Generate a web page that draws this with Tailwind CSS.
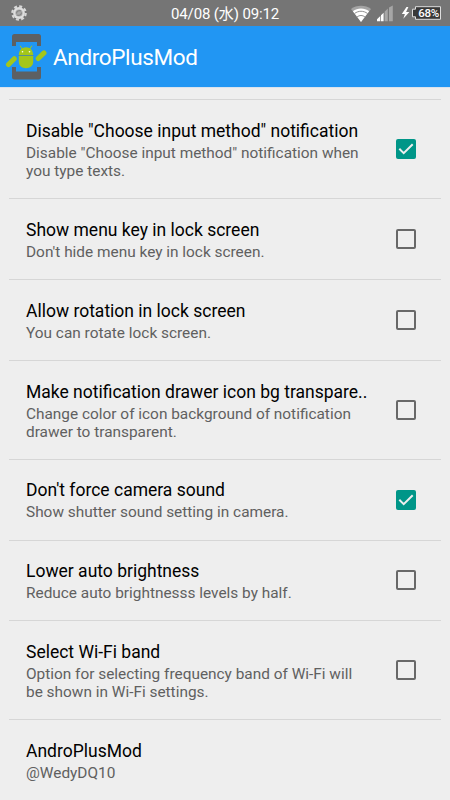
<!DOCTYPE html>
<html lang="en">
<head>
<meta charset="utf-8">
<title>AndroPlusMod</title>
<script src="https://cdn.jsdelivr.net/npm/@tailwindcss/browser@4"></script>
</head>
<body class="w-[450px] h-[800px] overflow-hidden bg-[#eeeeee] font-[Roboto,'Noto_Sans_CJK_JP',sans-serif]">
<header>
  <div class="relative flex h-[26px] items-center justify-between bg-[#757575] px-[10px] text-white">
    <svg class="size-[18px]" viewBox="0 0 18 18">
      <circle cx="9" cy="9" r="6.7" fill="none" stroke="#d8d8d8" stroke-width="2.2" stroke-dasharray="3 2.26"/>
      <circle cx="9" cy="9" r="5.9" fill="#dedede"/>
      <circle cx="9" cy="9" r="3.6" fill="#aaa"/>
      <path d="M6.5 9.5C6.5 7 9 6 11 7M7 11c2 1 4.500 0 4.500-2.500" fill="none" stroke="#858585" stroke-width="1.200"/>
    </svg>
    <div class="absolute left-[171px] top-[4px] h-[20px] whitespace-nowrap text-[15px] leading-[20px] tracking-[-.13px]">04/08 (水) 09:12</div>
    <svg class="absolute left-[348px] top-[3px] h-[22px] w-[96px]" viewBox="348 3 96 22">
      <path d="M361 22 351 9C356.500 4.600 365.500 4.600 371 9Z" fill="#a4a4a4"/>
      <path d="M361 22 352.900 11.200C357.500 7.500 364.500 7.500 369.100 11.200Z" fill="#fff"/>
      <path d="M354.500 13.500C358.500 10.500 363.500 10.500 367.500 13.500M357 17C359.500 15 362.500 15 365 17" fill="none" stroke="#858585" stroke-width=".9"/>
      <path d="M377 21.300v-2l3.300-3.200v5.200zM381 21.300v-6l2.600-2.600v8.600z" fill="#fff"/>
      <path d="M384.600 21.300v-9.600l3.200-3.200v12.800zM389 21.300V7.400l3.800-2v15.900z" fill="#a6a6a6"/>
      <path d="m406.500 7-4.700 7h3.100l-1.600 4.800 6.100-6.900h-3.300l2.300-4.900z" fill="#fff"/>
      <path d="M415.500 6.700h25v12.600h-25v-2.500h-3V9.200h3z" fill="#393939" stroke="#ddd" stroke-width="1"/>
    </svg>
    <div class="absolute left-[417px] top-[7px] w-[23px] text-center text-[11.500px] font-medium leading-[13px] tracking-[-.3px]">68%</div>
  </div>
  <div class="flex h-[61px] items-center gap-[5px] bg-[#2196f3] pl-[5px] shadow-[0_1px_0_#d9e3ee]">
    <svg class="h-[48px] w-[43px]" viewBox="5 33 43 48">
      <path d="M12 46V36.500Q12 34 14.500 34h24Q41 34 41 36.500V46h-4v-4H16v4zM12 67v10Q12 79.500 14.500 79.500h24Q41 79.500 41 77V67h-4v4.500H16V67z" fill="#5d6063"/>
      <g fill="#a4c619">
        <path d="M18.800 55C19 50 22 47.300 26 47.300S33 50 33.200 55zM18.800 56h14.400v5.500C33.200 66 30 68.200 26 68.200S18.800 66 18.800 61.500z"/>
        <path d="m8.500 64.500 5.800-5.800M38.200 58.500l5.800-5.600" stroke="#a4c619" stroke-width="5" stroke-linecap="round"/>
        <path d="m22.300 49-2-3M29.700 49l2-3" stroke="#a4c619" stroke-width="1" stroke-linecap="round"/>
      </g>
      <path d="M18.500 55.500h15" stroke="#668c78" stroke-width=".8"/>
      <circle cx="22.500" cy="51.700" r=".8" fill="#fff"/><circle cx="29.500" cy="51.700" r=".8" fill="#fff"/>
    </svg>
    <h1 class="text-[22.500px] leading-[28px] tracking-[-.36px] text-white">AndroPlusMod</h1>
  </div>
</header>
<main class="px-[9px] pt-[12px]">
  <section class="flex h-[99px] items-start border-t border-[#d6d6d6] pl-[17px]">
    <div class="w-[370px] whitespace-nowrap pt-[20px]"><h2 class="text-[17.500px] leading-[22px] text-black">Disable "Choose input method" notification</h2>
      <p class="pt-[2px] text-[15.400px] leading-[18px] text-[#606060]">Disable "Choose input method" notification when<br>you type texts.</p></div>
    <svg class="mt-[39px] size-[20px]" viewBox="0 0 20 20"><rect width="20" height="20" rx="2" fill="#009688"/><path d="m3.300 9.800 4.400 4.400 9-9" fill="none" stroke="#eee" stroke-width="2"/></svg>
  </section>
  <section class="flex h-[81px] items-start border-t border-[#d6d6d6] pl-[17px]">
    <div class="w-[370px] whitespace-nowrap pt-[20px]"><h2 class="text-[17.500px] leading-[22px] text-black">Show menu key in lock screen</h2>
      <p class="pt-[2px] text-[15.400px] leading-[18px] text-[#606060]">Don't hide menu key in lock screen.</p></div>
    <div class="mt-[30px] size-[20px] rounded-[2px] border-2 border-[#686868]"></div>
  </section>
  <section class="flex h-[81px] items-start border-t border-[#d6d6d6] pl-[17px]">
    <div class="w-[370px] whitespace-nowrap pt-[20px]"><h2 class="text-[17.500px] leading-[22px] text-black">Allow rotation in lock screen</h2>
      <p class="pt-[2px] text-[15.400px] leading-[18px] text-[#606060]">You can rotate lock screen.</p></div>
    <div class="mt-[30px] size-[20px] rounded-[2px] border-2 border-[#686868]"></div>
  </section>
  <section class="flex h-[99px] items-start border-t border-[#d6d6d6] pl-[17px]">
    <div class="w-[370px] whitespace-nowrap pt-[20px]"><h2 class="text-[17.500px] leading-[22px] text-black">Make notification drawer icon bg transpare..</h2>
      <p class="pt-[2px] text-[15.400px] leading-[18px] text-[#606060]">Change color of icon background of notification<br>drawer to transparent.</p></div>
    <div class="mt-[39px] size-[20px] rounded-[2px] border-2 border-[#686868]"></div>
  </section>
  <section class="flex h-[81px] items-start border-t border-[#d6d6d6] pl-[17px]">
    <div class="w-[370px] whitespace-nowrap pt-[19px]"><h2 class="text-[17.500px] leading-[22px] text-black">Don't force camera sound</h2>
      <p class="pt-[2px] text-[15.400px] leading-[18px] text-[#606060]">Show shutter sound setting in camera.</p></div>
    <svg class="mt-[30px] size-[20px]" viewBox="0 0 20 20"><rect width="20" height="20" rx="2" fill="#009688"/><path d="m3.300 9.800 4.400 4.400 9-9" fill="none" stroke="#eee" stroke-width="2"/></svg>
  </section>
  <section class="flex h-[80px] items-start border-t border-[#d6d6d6] pl-[17px]">
    <div class="w-[370px] whitespace-nowrap pt-[19px]"><h2 class="text-[17.500px] leading-[22px] text-black">Lower auto brightness</h2>
      <p class="pt-[2px] text-[15.400px] leading-[18px] text-[#606060]">Reduce auto brightnesss levels by half.</p></div>
    <div class="mt-[29px] size-[20px] rounded-[2px] border-2 border-[#686868]"></div>
  </section>
  <section class="flex h-[99px] items-start border-t border-[#d6d6d6] pl-[17px]">
    <div class="w-[370px] whitespace-nowrap pt-[20px]"><h2 class="text-[17.500px] leading-[22px] text-black">Select Wi-Fi band</h2>
      <p class="pt-[2px] text-[15.400px] leading-[18px] text-[#606060]">Option for selecting frequency band of Wi-Fi will<br>be shown in Wi-Fi settings.</p></div>
    <div class="mt-[39px] size-[20px] rounded-[2px] border-2 border-[#686868]"></div>
  </section>
  <section class="border-t border-[#d6d6d6] pl-[17px] pt-[20px]">
    <h2 class="text-[17.500px] leading-[22px] text-black">AndroPlusMod</h2>
    <p class="pt-[2px] text-[15.400px] leading-[18px] text-[#606060]">@WedyDQ10</p>
  </section>
</main>
</body>
</html>
